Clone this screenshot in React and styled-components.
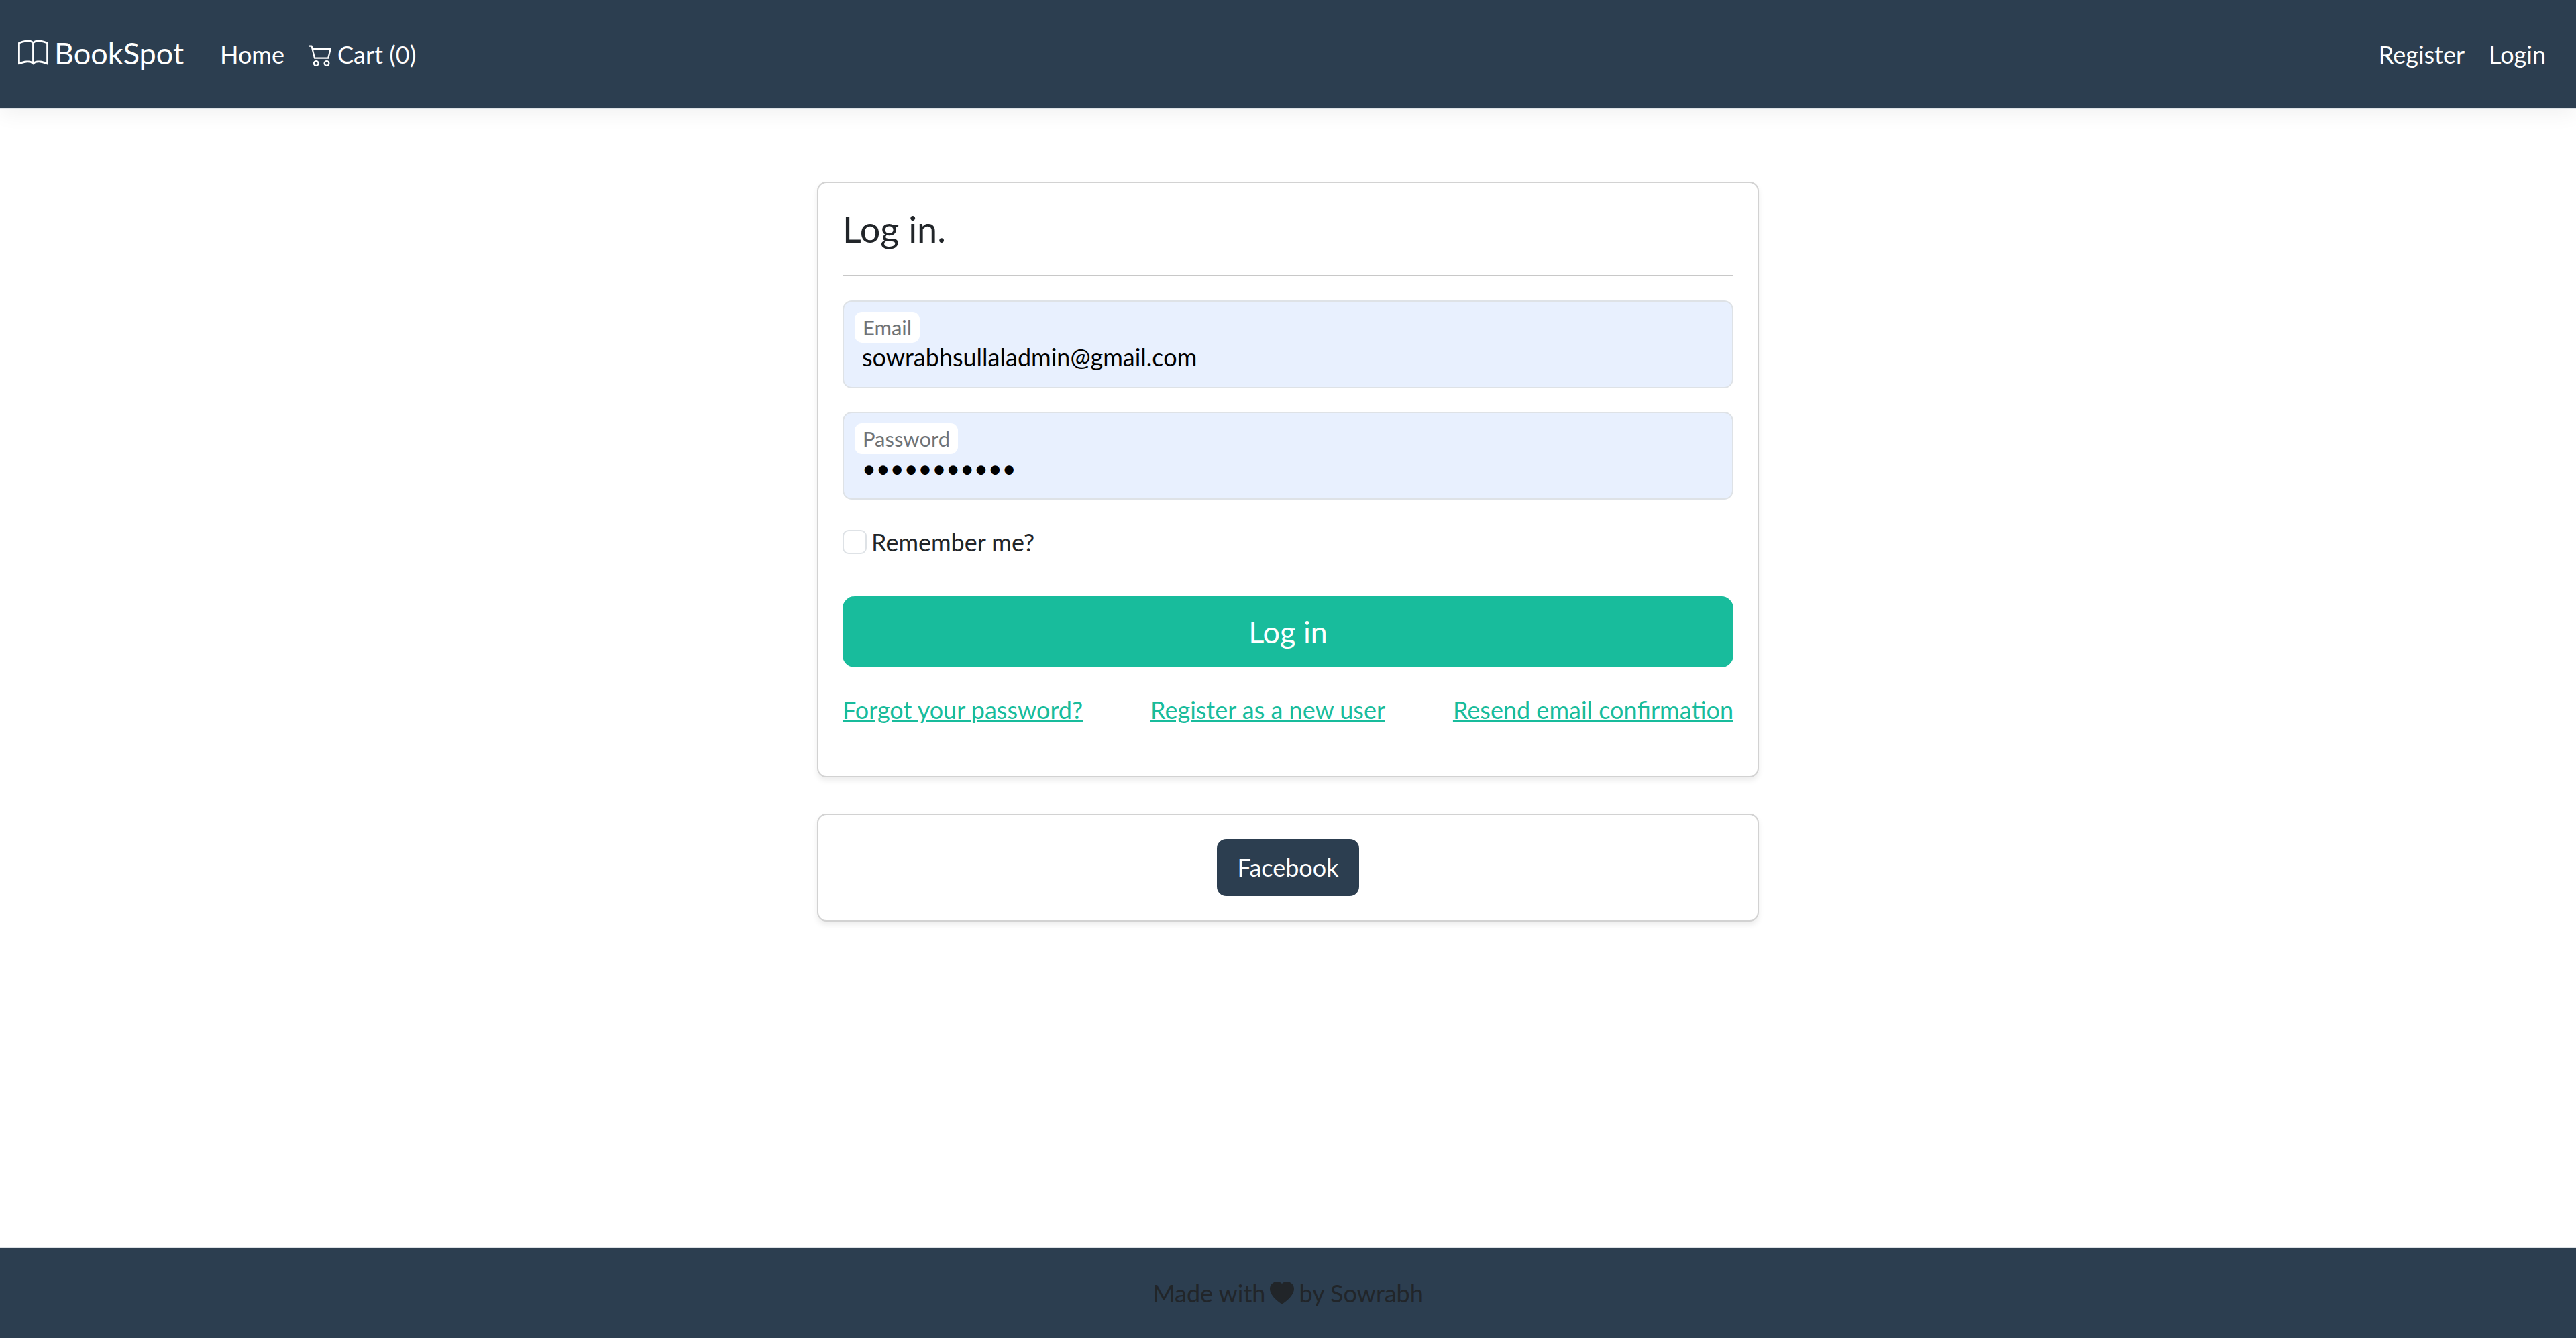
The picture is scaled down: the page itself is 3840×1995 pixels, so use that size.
import React from "react";
import styled, { createGlobalStyle } from "styled-components";
import { BsBook, BsCart2, BsHeartFill } from "react-icons/bs";

const GlobalStyle = createGlobalStyle`
  *, *::before, *::after { box-sizing: border-box; }
  body {
    margin: 0;
    background: #fff;
    color: #212529;
    font-family: Lato, "Open Sans", sans-serif;
    font-size: 36px;
    line-height: 54px;
  }
`;

const Page = styled.div`
  display: flex;
  flex-direction: column;
  min-height: 100vh;
`;

const Header = styled.header`
  border-bottom: 2px solid #dee2e6;
  box-shadow: 0 9px 27px rgba(0, 0, 0, 0.05);
`;

const Navbar = styled.nav`
  display: flex;
  align-items: center;
  padding: 45px 27px;
  background: #2c3e50;
`;

const Brand = styled.a`
  margin-right: 36px;
  padding-bottom: 3px;
  color: #fff;
  font-size: 45px;
  line-height: 68px;
  text-decoration: none;
  white-space: nowrap;

  svg {
    margin-right: 9px;
    vertical-align: -0.125em;
  }
`;

const NavList = styled.ul`
  display: flex;
  margin: 0;
  margin-left: ${(p) => (p.$end ? "auto" : "0")};
  padding: 0;
  list-style: none;
`;

const NavLink = styled.a`
  display: block;
  padding: 0 18px;
  color: #fff;
  text-decoration: none;
  white-space: nowrap;

  svg {
    margin-right: 7px;
    vertical-align: -0.125em;
  }
`;

const Main = styled.main`
  display: flex;
  flex: 1;
  flex-direction: column;
  gap: 54px;
  width: 100%;
  max-width: 1404px;
  margin: 0 auto;
  padding: 108px 0;
`;

const Card = styled.section`
  padding: 36px;
  border: 2px solid #d2d2d2;
  border-radius: 14px;
  background: #fff;
  box-shadow: 0 5px 9px rgba(0, 0, 0, 0.075);
`;

const Title = styled.h2`
  margin: 0;
  font-size: 54px;
  font-weight: 400;
  line-height: 65px;
`;

const Divider = styled.hr`
  margin: 36px 0;
  border: 0;
  border-top: 2px solid #c8c8c8;
`;

const Fields = styled.div`
  display: grid;
  gap: 35px;
  margin-bottom: 36px;
`;

const Field = styled.div`
  position: relative;
`;

const FieldInput = styled.input`
  display: block;
  width: 100%;
  height: 131px;
  padding: 58px 27px 22px;
  border: 2px solid #dee2e6;
  border-radius: 14px;
  outline: 0;
  background: #e8f0fe;
  color: #000;
  font: inherit;
`;

const FieldLabel = styled.label`
  position: absolute;
  top: 17px;
  left: 18px;
  padding: 0 12px;
  border-radius: 11px;
  background: #fff;
  color: #6f7377;
  font-size: 31px;
  line-height: 46px;
`;

const CheckRow = styled.div`
  display: flex;
  align-items: center;
  gap: 7px;
  margin-bottom: 54px;
`;

const Checkbox = styled.input`
  appearance: none;
  width: 36px;
  height: 36px;
  margin: 0;
  border: 2px solid #dee2e6;
  border-radius: 9px;
  background: #fff;

  &:checked { background: #2c3e50; }
`;

const SubmitButton = styled.button`
  display: block;
  width: 100%;
  padding: 17px 36px;
  border: 2px solid #18bc9c;
  border-radius: 18px;
  background: #18bc9c;
  color: #fff;
  font: inherit;
  font-size: 45px;
  line-height: 68px;
`;

const LinkRow = styled.div`
  display: flex;
  justify-content: space-between;
  margin: 36px 0;
`;

const TextLink = styled.a`
  color: #18bc9c;
`;

const ProviderButton = styled.button`
  display: block;
  margin: 0 auto;
  padding: 13px 29px 14px;
  border: 2px solid #2c3e50;
  border-radius: 14px;
  background: #2c3e50;
  color: #fff;
  font: inherit;
`;

const Footer = styled.footer`
  border-top: 2px solid #dee2e6;
  background: #2c3e50;
  line-height: 134px;
  text-align: center;

  svg {
    margin: 0 7px;
    vertical-align: -0.125em;
  }
`;

export default function App() {
  return (
    <Page>
      <GlobalStyle />
      <Header>
        <Navbar>
          <Brand href="#">
            <BsBook />
            BookSpot
          </Brand>
          <NavList>
            <li><NavLink href="#">Home</NavLink></li>
            <li><NavLink href="#"><BsCart2 />Cart (0)</NavLink></li>
          </NavList>
          <NavList $end>
            <li><NavLink href="#">Register</NavLink></li>
            <li><NavLink href="#">Login</NavLink></li>
          </NavList>
        </Navbar>
      </Header>

      <Main>
        <Card>
          <form onSubmit={(e) => e.preventDefault()}>
            <Title>Log in.</Title>
            <Divider />
            <Fields>
              <Field>
                <FieldInput id="email" type="email" defaultValue="sowrabhsullaladmin@gmail.com" />
                <FieldLabel htmlFor="email">Email</FieldLabel>
              </Field>
              <Field>
                <FieldInput id="password" type="password" defaultValue="password123" />
                <FieldLabel htmlFor="password">Password</FieldLabel>
              </Field>
            </Fields>
            <CheckRow>
              <Checkbox id="remember" type="checkbox" />
              <label htmlFor="remember">Remember me?</label>
            </CheckRow>
            <SubmitButton type="submit">Log in</SubmitButton>
            <LinkRow>
              <TextLink href="#">Forgot your password?</TextLink>
              <TextLink href="#">Register as a new user</TextLink>
              <TextLink href="#">Resend email confirmation</TextLink>
            </LinkRow>
          </form>
        </Card>
        <Card>
          <ProviderButton type="button">Facebook</ProviderButton>
        </Card>
      </Main>

      <Footer>
        Made with
        <BsHeartFill />
        by Sowrabh
      </Footer>
    </Page>
  );
}
